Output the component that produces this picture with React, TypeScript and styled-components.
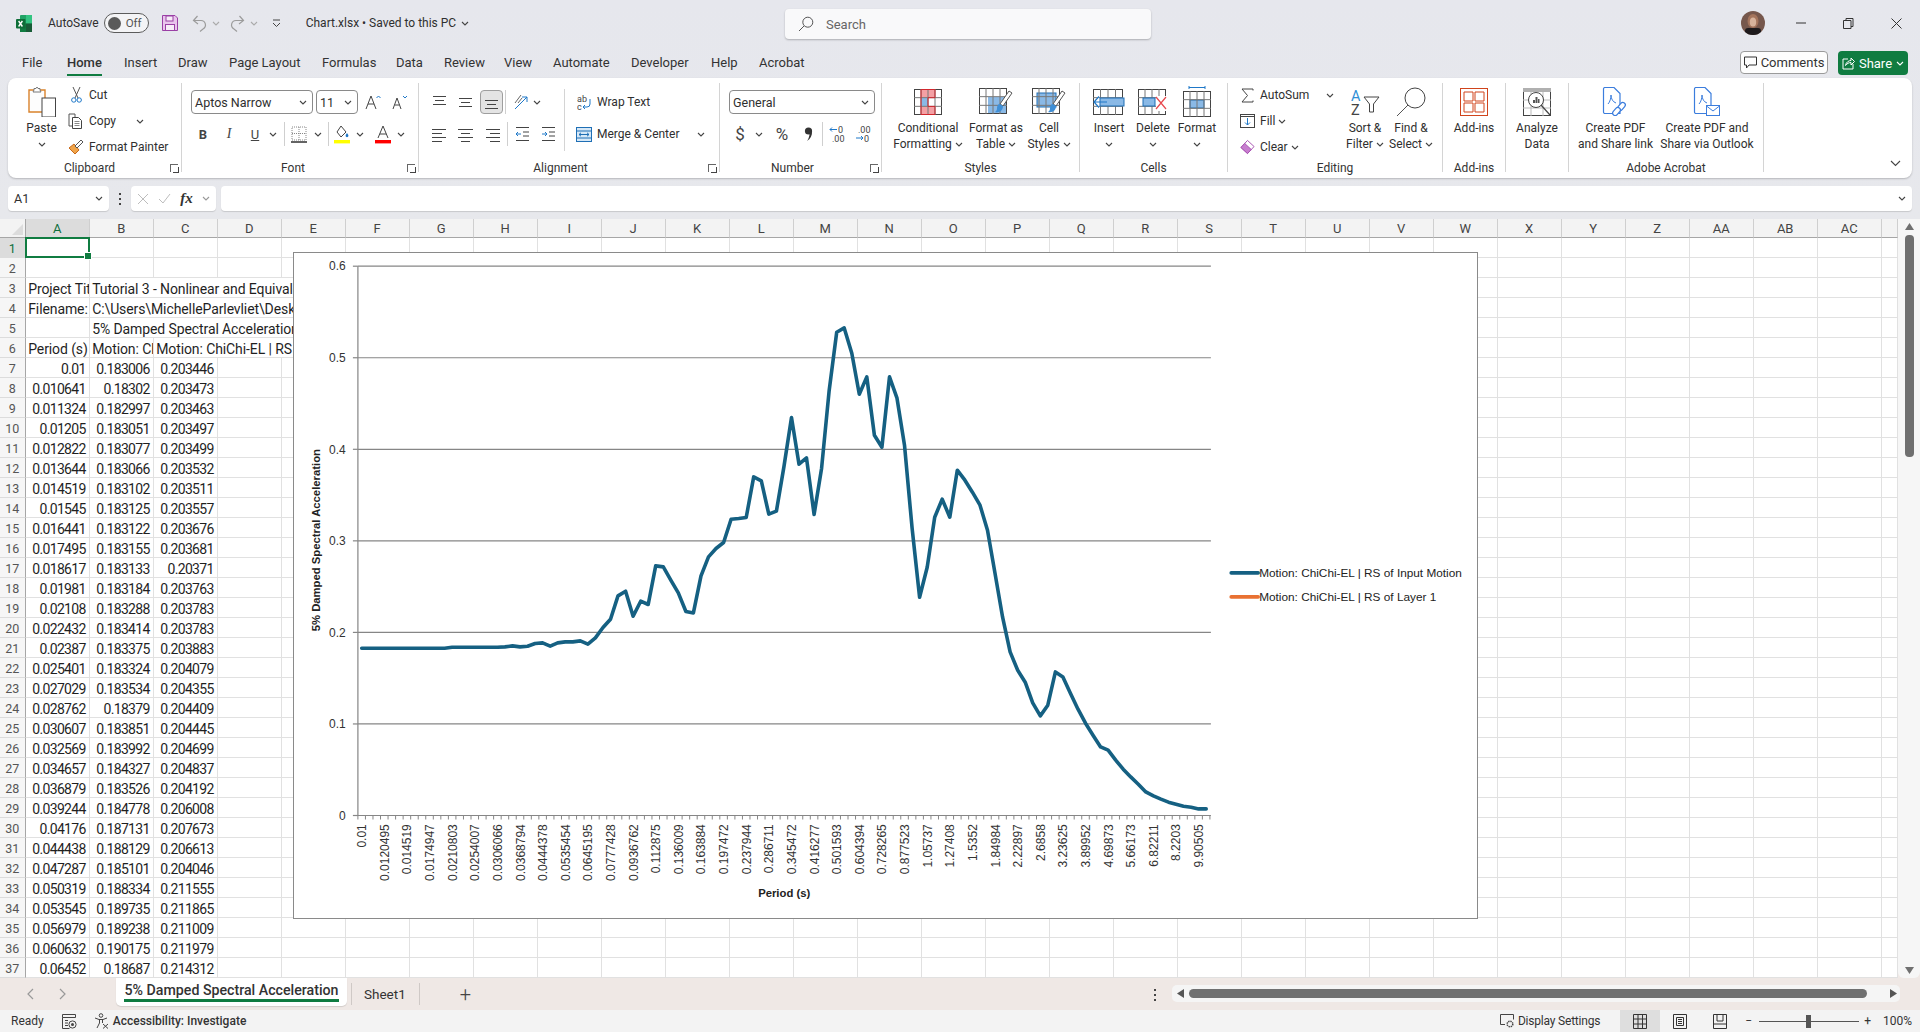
import React from 'react';
import styled, { createGlobalStyle } from 'styled-components';

const GlobalStyle = createGlobalStyle`
  html, body { margin: 0; padding: 0; background: #e6e7ed; }
  body { font-family: Roboto, "Liberation Sans", sans-serif; color: #2f2f2f; overflow: hidden; }
  * { box-sizing: border-box; }
`;

// #region Shell
const Page = styled.div`
  width: 1920px;
  height: 1032px;
  display: flex;
  flex-direction: column;
  overflow: hidden;
  background: linear-gradient(#e6e7ed 0, #e7e8ec 220px, #f0e9e6 980px);
`;
const TitleBar = styled.div`
  height: 46px;
  display: flex;
  align-items: center;
  padding-left: 16px;
  position: relative;
  font-size: 12px;
`;
const Spot = styled.div<{ $w?: number; $ml?: number; $mr?: number }>`
  display: flex;
  align-items: center;
  justify-content: center;
  flex: none;
  width: ${(p) => (p.$w ? `${p.$w}px` : 'auto')};
  margin-left: ${(p) => p.$ml ?? 0}px;
  margin-right: ${(p) => p.$mr ?? 0}px;
`;
const Toggle = styled.div`
  width: 45px;
  height: 20px;
  margin-left: 5px;
  border: 1.3px solid #5c5c5c;
  border-radius: 10px;
  display: flex;
  align-items: center;
  padding-left: 3px;
  font-size: 11.5px;
  color: #555;
  gap: 5px;
  background: #f4f4f6;
`;
const Knob = styled.span`
  width: 13px;
  height: 13px;
  border-radius: 50%;
  background: #5a5a5a;
`;
const SearchBox = styled.div`
  position: absolute;
  left: 785px;
  top: 9px;
  width: 366px;
  height: 30px;
  background: #f9f9fa;
  border-radius: 4px;
  box-shadow: 0 1px 2px rgba(0, 0, 0, 0.25);
  display: flex;
  align-items: center;
  padding-left: 13px;
  gap: 12px;
  font-size: 13px;
  color: #666;
`;
const WindowControls = styled.div`
  position: absolute;
  right: 0;
  top: 0;
  height: 46px;
  display: flex;
  align-items: center;
`;
const TabRow = styled.div`
  height: 32px;
  position: relative;
  display: flex;
  align-items: flex-start;
  padding: 8px 0 0 22px;
  font-size: 13px;
  color: #333;
`;
const MenuTab = styled.div<{ $left: number; $active?: boolean }>`
  position: absolute;
  left: ${(p) => p.$left}px;
  top: 8px;
  height: 22px;
  line-height: 18px;
  font-weight: ${(p) => (p.$active ? 500 : 400)};
  border-bottom: ${(p) => (p.$active ? '2.5px solid #107c41' : 'none')};
`;
const CommentsButton = styled.div`
  position: absolute;
  left: 1740px;
  top: 5px;
  width: 88px;
  height: 23px;
  background: #fdfdfd;
  border: 1px solid #9a9a9a;
  border-radius: 4px;
  display: flex;
  align-items: center;
  justify-content: center;
  gap: 4px;
  font-size: 13px;
`;
const ShareButton = styled.div`
  position: absolute;
  left: 1838px;
  top: 5px;
  width: 70px;
  height: 24px;
  background: #107c41;
  border-radius: 4px;
  color: #fff;
  display: flex;
  align-items: center;
  justify-content: center;
  gap: 4px;
  font-size: 13px;
`;
// #endregion

// #region Ribbon
const Ribbon = styled.div`
  height: 100px;
  margin: 0 8px;
  padding: 5px 0 6px;
  background: #fff;
  border-radius: 8px;
  box-shadow: 0 1px 2px rgba(0, 0, 0, 0.22);
  display: flex;
  position: relative;
  font-size: 12px;
  color: #2f2f2f;
`;
const Group = styled.div<{ $w: number }>`
  width: ${(p) => p.$w}px;
  flex: none;
  height: 89px;
  border-right: 1px solid #d4d4d4;
  display: flex;
  flex-direction: column;
  position: relative;
`;
const GroupBody = styled.div<{ $pad?: number }>`
  flex: 1;
  display: flex;
  padding-left: ${(p) => p.$pad ?? 0}px;
  min-height: 0;
`;
const GroupLabel = styled.div<{ $pr?: number }>`
  height: 13px;
  margin-bottom: -3px;
  padding-right: ${(p) => p.$pr ?? 0}px;
  line-height: 12px;
  text-align: center;
  font-size: 12px;
  color: #333;
  white-space: nowrap;
`;
const Launcher = styled.span`
  position: absolute;
  right: 3px;
  bottom: 0;
  width: 8px;
  height: 8px;
  border-left: 1px solid #666;
  border-top: 1px solid #666;
  &::after {
    content: '';
    position: absolute;
    left: 2px;
    top: 2px;
    width: 5px;
    height: 5px;
    border-right: 1px solid #444;
    border-bottom: 1px solid #444;
  }
`;
const LargeButton = styled.div<{ $w: number }>`
  width: ${(p) => p.$w}px;
  flex: none;
  display: flex;
  flex-direction: column;
  align-items: center;
`;
const LargeIcon = styled.div`
  height: 37px;
  display: flex;
  align-items: center;
  justify-content: center;
`;
const LabelLine = styled.div`
  height: 16px;
  line-height: 16px;
  display: flex;
  align-items: center;
  gap: 3px;
  white-space: nowrap;
`;
const SmallColumn = styled.div<{ $w: number }>`
  width: ${(p) => p.$w}px;
  flex: none;
  display: flex;
  flex-direction: column;
  margin-top: -1px;
`;
const SmallRow = styled.div`
  height: 26px;
  display: flex;
  align-items: center;
`;
const SmallText = styled.span`
  margin-left: 5px;
  white-space: nowrap;
`;
const ControlStack = styled.div<{ $w?: number }>`
  display: flex;
  flex-direction: column;
  gap: 8px;
  padding-top: 7px;
  width: ${(p) => (p.$w ? `${p.$w}px` : 'auto')};
  flex: none;
`;
const ControlRow = styled.div`
  height: 24px;
  display: flex;
  align-items: center;
`;
const Select = styled.div<{ $w: number; $ml?: number }>`
  width: ${(p) => p.$w}px;
  height: 24px;
  margin-left: ${(p) => p.$ml ?? 0}px;
  flex: none;
  border: 1px solid #8a8a8a;
  border-radius: 4px;
  display: flex;
  align-items: center;
  justify-content: space-between;
  padding: 0 5px 0 3px;
  font-size: 12.5px;
`;
const VRule = styled.span<{ $ml?: number; $mr?: number }>`
  width: 1px;
  height: 24px;
  background: #cfcfcf;
  flex: none;
  margin-left: ${(p) => p.$ml ?? 0}px;
  margin-right: ${(p) => p.$mr ?? 0}px;
`;
const TallRule = styled.span`
  width: 1px;
  height: 62px;
  margin-top: 6px;
  background: #d4d4d4;
  flex: none;
`;
const ActiveSlot = styled.div`
  width: 23px;
  height: 24px;
  margin-left: 2px;
  background: #e4e4e4;
  border: 1px solid #9e9e9e;
  border-radius: 4px;
  display: flex;
  align-items: flex-end;
  justify-content: center;
  padding-bottom: 3px;
  flex: none;
`;
const Glyph = styled.span<{ $bold?: boolean; $italic?: boolean; $under?: boolean; $size?: number; $serif?: boolean }>`
  font-size: ${(p) => p.$size ?? 14}px;
  font-weight: ${(p) => (p.$bold ? 700 : 400)};
  font-style: ${(p) => (p.$italic ? 'italic' : 'normal')};
  text-decoration: ${(p) => (p.$under ? 'underline' : 'none')};
  font-family: ${(p) => (p.$serif ? '"Liberation Serif", serif' : 'inherit')};
  color: #444;
  line-height: 1;
`;
const Collapse = styled.div`
  position: absolute;
  right: 11px;
  bottom: 8px;
`;
// #endregion

// #region Formula bar
const FormulaBar = styled.div`
  height: 41px;
  padding: 8px;
  display: flex;
  gap: 5px;
  align-items: flex-start;
`;
const FieldBox = styled.div<{ $w?: number }>`
  height: 25px;
  width: ${(p) => (p.$w ? `${p.$w}px` : 'auto')};
  flex: ${(p) => (p.$w ? 'none' : 1)};
  background: #fff;
  border-radius: 4px;
  box-shadow: 0 1px 1px rgba(0, 0, 0, 0.14);
  display: flex;
  align-items: center;
  justify-content: space-between;
  padding: 0 6px;
  font-size: 12.5px;
`;
const Dots = styled.div`
  width: 12px;
  height: 25px;
  display: flex;
  flex-direction: column;
  align-items: center;
  justify-content: center;
  gap: 3px;
  span {
    width: 2px;
    height: 2px;
    background: #444;
  }
`;
const FxText = styled.span`
  font-family: "Liberation Serif", serif;
  font-style: italic;
  font-size: 15px;
  font-weight: 700;
  color: #333;
`;
// #endregion

// #region Sheet
const SheetRow = styled.div`
  height: 759px;
  display: flex;
`;
const SheetArea = styled.div`
  width: 1898px;
  height: 759px;
  position: relative;
  overflow: hidden;
  background: #fff;
`;
const Grid = styled.div`
  display: grid;
  grid-template-columns: 25.7px repeat(29, 64px) 16.3px;
  grid-template-rows: 19px repeat(37, 20px);
`;
const Corner = styled.div`
  background: #f3f3f3;
  border-right: 1px solid #a6a6a6;
  border-bottom: 1px solid #a6a6a6;
  position: relative;
  &::after {
    content: '';
    position: absolute;
    right: 2px;
    bottom: 2px;
    border-style: solid;
    border-width: 0 0 11px 11px;
    border-color: transparent transparent #dcdcdc transparent;
  }
`;
const ColHead = styled.div<{ $on?: boolean }>`
  background: ${(p) => (p.$on ? '#dcdcdc' : '#f3f3f3')};
  color: ${(p) => (p.$on ? '#0f6e3d' : '#444')};
  border-right: 1px solid #cfcfcf;
  border-bottom: 1px solid #a6a6a6;
  font-size: 13px;
  line-height: 19px;
  text-align: center;
`;
const RowHead = styled.div<{ $on?: boolean }>`
  background: ${(p) => (p.$on ? '#dcdcdc' : '#f6f6f6')};
  color: ${(p) => (p.$on ? '#0f6e3d' : '#555')};
  border-right: 1px solid #a6a6a6;
  border-bottom: 1px solid #dcdcdc;
  font-size: 12.5px;
  line-height: 22px;
  text-align: center;
  overflow: hidden;
`;
const Cell = styled.div<{ $right?: boolean; $span?: number; $selected?: boolean }>`
  grid-column: span ${(p) => p.$span ?? 1};
  border-right: 1px solid #e1e1e1;
  border-bottom: 1px solid #e1e1e1;
  font-size: 14px;
  letter-spacing: ${(p) => (p.$right ? '-0.68px' : '-0.1px')};
  line-height: 23px;
  padding: 0 3px 0 2.5px;
  color: #1f1f1f;
  white-space: nowrap;
  overflow: ${(p) => (p.$selected ? 'visible' : 'hidden')};
  text-align: ${(p) => (p.$right ? 'right' : 'left')};
  position: relative;
  ${(p) =>
    p.$selected &&
    `
    &::before {
      content: '';
      position: absolute;
      left: -1px; top: -1px; right: -1px; bottom: -1px;
      border: 2px solid #107c41;
      z-index: 2;
    }
    &::after {
      content: '';
      position: absolute;
      right: -3px; bottom: -3px;
      width: 6px; height: 6px;
      background: #107c41;
      border: 1px solid #fff;
      z-index: 3;
    }
  `}
`;
const ChartBox = styled.div`
  position: absolute;
  left: 292.5px;
  top: 32.5px;
  width: 1185.5px;
  height: 667px;
  background: #fff;
  border: 1.3px solid #8a8a8a;
  svg {
    display: block;
    margin: -1px;
  }
`;
const VScroll = styled.div`
  width: 22px;
  height: 759px;
  background: #f6f6f6;
  border-radius: 0 0 6px 6px;
  display: flex;
  flex-direction: column;
  align-items: center;
  position: relative;
  padding-top: 3px;
`;
const VThumb = styled.div`
  width: 9px;
  height: 222px;
  margin-top: 4px;
  background: #6f6f6f;
  border-radius: 4px;
`;
const VDown = styled.div`
  position: absolute;
  bottom: 0;
  left: 0;
  right: 0;
  height: 12px;
  display: flex;
  justify-content: center;
`;
// #endregion

// #region Tabs + status
const SheetTabs = styled.div`
  height: 32px;
  display: flex;
  background: #efe8e5;
  position: relative;
`;
const TabNav = styled.div`
  width: 116px;
  display: flex;
  align-items: center;
  padding-left: 27px;
  gap: 25px;
  flex: none;
`;
const ActiveSheet = styled.div`
  width: 231px;
  height: 28px;
  background: #fff;
  border-radius: 0 0 5px 5px;
  box-shadow: 0 1px 1px rgba(0, 0, 0, 0.12);
  padding: 0 8px;
  font-weight: 500;
  font-size: 14.2px;
  color: #333;
  flex: none;
`;
const ActiveSheetText = styled.div`
  height: 24px;
  line-height: 24px;
  border-bottom: 3px solid #107c41;
  white-space: nowrap;
  text-align: center;
`;
const PlainSheet = styled.div`
  display: flex;
  align-items: center;
  height: 22px;
  margin: 5px 0 0 4px;
  padding: 0 13px 0 12px;
  border-left: 1px solid #cfc9c6;
  border-right: 1px solid #cfc9c6;
  font-size: 13.5px;
  color: #333;
`;
const AddSheet = styled.div`
  margin-left: 40px;
  font-size: 20px;
  line-height: 32px;
  font-weight: 300;
  color: #444;
`;
const TabMenuDots = styled(Dots)`
  position: absolute;
  left: 1149px;
  top: 4px;
`;
const HScroll = styled.div`
  position: absolute;
  left: 1172px;
  top: 7px;
  width: 728px;
  height: 17px;
  background: #f5f5f5;
  border-radius: 5px;
  display: flex;
  align-items: center;
  padding-left: 4px;
`;
const HThumb = styled.div`
  width: 678px;
  height: 9px;
  margin-left: 4px;
  background: #707070;
  border-radius: 4.5px;
`;
const StatusBar = styled.div`
  height: 22px;
  display: flex;
  align-items: center;
  background: #f3f3f3;
  font-size: 12px;
  color: #333;
  padding-left: 11px;
`;
const StatusText = styled.span<{ $strong?: boolean; $ml?: number; $mr?: number; $tight?: boolean }>`
  font-weight: ${(p) => (p.$strong ? 500 : 400)};
  margin-left: ${(p) => p.$ml ?? 0}px;
  margin-right: ${(p) => p.$mr ?? 0}px;
  letter-spacing: ${(p) => (p.$tight ? '-0.2px' : 'normal')};
  white-space: nowrap;
`;
const StatusFill = styled.div`
  flex: 1;
`;
const ViewButton = styled.div<{ $on?: boolean }>`
  width: 40px;
  height: 22px;
  display: flex;
  align-items: center;
  justify-content: center;
  background: ${(p) => (p.$on ? '#dedede' : 'transparent')};
  flex: none;
`;
const ZoomSlider = styled.div`
  width: 100px;
  height: 1px;
  background: #555;
  margin: 0 5px 0 7px;
  position: relative;
  flex: none;
  &::after {
    content: '';
    position: absolute;
    left: 47px;
    top: -6px;
    width: 5px;
    height: 13px;
    background: #555;
  }
`;
// #endregion

// #region Icons
const Chev = ({ c = '#444' }: { c?: string }) => (
  <svg width="8" height="5" viewBox="0 0 8 5">
    <path d="M1 1l3 3 3-3" fill="none" stroke={c} strokeWidth="1.1" />
  </svg>
);

const ExcelLogo = () => (
  <svg width="16" height="17" viewBox="0 0 16 17">
    <rect x="4" y="0" width="12" height="17" rx="1" fill="#21a366" />
    <rect x="10" y="0" width="6" height="8.5" fill="#33c481" />
    <rect x="4" y="8.5" width="6" height="8.5" fill="#107c41" />
    <rect x="10" y="8.5" width="6" height="8.5" fill="#185c37" />
    <rect x="0" y="4" width="9.5" height="9.5" rx="1" fill="#0e6e38" />
    <path d="M2.6 6l3.8 5.5M6.4 6l-3.8 5.5" stroke="#fff" strokeWidth="1.4" />
  </svg>
);
const SaveIcon = () => (
  <svg width="16" height="16" viewBox="0 0 16 16">
    <path d="M.5.5h12.5l2.5 2.5v12.5H.5z" fill="#e9c5ec" stroke="#9a3fa5" />
    <rect x="4" y="1" width="7" height="5" fill="#f7edf8" stroke="#9a3fa5" />
    <rect x="3.5" y="9.5" width="9" height="6" fill="#f7edf8" stroke="#9a3fa5" />
  </svg>
);
const Undo = ({ flip }: { flip?: boolean }) => (
  <svg width="15" height="17" viewBox="0 0 15 17" style={flip ? { transform: 'scaleX(-1)' } : undefined}>
    <path d="M5.500 1L1.500 5.500l4.500 3.500M2 5.500h7a4.500 4.500 0 0 1 2 8.500l-3 2.500" fill="none" stroke="#9c9c9c" strokeWidth="1.2" />
  </svg>
);
const CustomizeIcon = () => (
  <svg width="9" height="9" viewBox="0 0 9 9">
    <path d="M1 1h7M1 4l3.5 3.5L8 4" fill="none" stroke="#444" strokeWidth="1" />
  </svg>
);
const Magnifier = ({ s = 16 }: { s?: number }) => (
  <svg width={s} height={s} viewBox="0 0 16 16">
    <circle cx="9.8" cy="6.2" r="5" fill="none" stroke="#555" strokeWidth="1" />
    <path d="M6 10L1 15" stroke="#555" strokeWidth="1" />
  </svg>
);
const Avatar = () => (
  <svg width="24" height="24" viewBox="0 0 24 24">
    <clipPath id="av">
      <circle cx="12" cy="12" r="12" />
    </clipPath>
    <g clipPath="url(#av)">
      <rect width="24" height="24" fill="#76574c" />
      <ellipse cx="12" cy="10" rx="5.5" ry="7" fill="#a4745c" />
      <ellipse cx="12" cy="11" rx="3.2" ry="4.5" fill="#d8b39c" />
      <rect x="4" y="17" width="16" height="8" rx="3" fill="#1e1a1c" />
    </g>
  </svg>
);
const CommentIcon = ({ c = '#333' }: { c?: string }) => (
  <svg width="13" height="13" viewBox="0 0 13 13">
    <path d="M.5 1h12v8H5L2.5 12V9h-2z" fill="none" stroke={c} />
  </svg>
);
const ShareIcon = () => (
  <svg width="13" height="14" viewBox="0 0 13 14">
    <path d="M6 3H1v10h10V8M3.5 9.5C4 6 7 4.5 9 4.5V2l3.5 3.5L9 9V6.5C7 6.5 5 7.5 3.5 9.5z" fill="none" stroke="#fff" />
  </svg>
);
const PasteIcon = () => (
  <svg width="28" height="31" viewBox="0 0 28 31">
    <path d="M1 4h16v22H1z" fill="#fdfdfd" stroke="#d9822b" strokeWidth="1.4" />
    <path d="M6 4V2.5h2L9 1l1 1.5h2V4l1 2H5z" fill="#fff" stroke="#777" />
    <rect x="14" y="12" width="13.5" height="19" fill="#fff" stroke="#444" />
  </svg>
);
const CutIcon = () => (
  <svg width="11" height="16" viewBox="0 0 11 16">
    <path d="M2 0l5 11M9 0L4 11" stroke="#555" fill="none" />
    <circle cx="2.8" cy="13" r="2.2" fill="none" stroke="#1f78c8" />
    <circle cx="8.2" cy="13" r="2.2" fill="none" stroke="#1f78c8" />
  </svg>
);
const CopyIcon = () => (
  <svg width="16" height="16" viewBox="0 0 16 16">
    <path d="M1 1h6v3M1 1v12h3" fill="none" stroke="#555" />
    <path d="M4.5 4.5h6l3 3v8h-9z" fill="#fff" stroke="#444" />
    <path d="M6.5 8.5h5M6.5 10.5h5M6.5 12.5h5" stroke="#888" />
  </svg>
);
const PainterIcon = () => (
  <svg width="16" height="16" viewBox="0 0 16 16">
    <path d="M1 9l5-4 5 6-4 4z" fill="#f0a54a" stroke="#c8691a" />
    <path d="M7 7l6-6 2 2-6 6z" fill="#fff" stroke="#555" />
  </svg>
);
const GrowA = ({ up }: { up?: boolean }) => (
  <svg width="16" height="16" viewBox="0 0 16 16">
    <path d={up ? 'M1 15L6 2l5 13M3 10h6' : 'M1 15l4-11 4 11M2.8 11h4.4'} fill="none" stroke="#444" />
    <path d={up ? 'M11.5 4L13.5 2l2 2' : 'M11 2l2 2 2-2'} fill="none" stroke="#1f78c8" />
  </svg>
);
const BordersIcon = () => (
  <svg width="16" height="17" viewBox="0 0 16 17">
    <path d="M1 1h14v13H1zM8 1v13M1 7.5h14" fill="none" stroke="#888" strokeDasharray="1 1" />
    <path d="M0 16h16" stroke="#222" strokeWidth="1.4" />
  </svg>
);
const FillIcon = () => (
  <svg width="16" height="19" viewBox="0 0 16 19">
    <path d="M7 1l5 6-5 5-4-5z" fill="#fff" stroke="#444" />
    <path d="M13 8c1 1.4 1.4 2 1.4 2.8a1.4 1.4 0 0 1-2.8 0c0-.8.4-1.4 1.4-2.8z" fill="#1f78c8" />
    <rect y="15" width="16" height="3.4" fill="#ffff00" />
  </svg>
);
const FontColorIcon = () => (
  <svg width="16" height="19" viewBox="0 0 16 19">
    <path d="M3 13L8 1l5 12M4.8 9h6.4" fill="none" stroke="#444" />
    <rect y="15" width="16" height="3.4" fill="#ff0000" />
  </svg>
);
const CommaIcon = () => (
  <svg width="9" height="15" viewBox="0 0 9 15">
    <circle cx="4.5" cy="4" r="3.6" fill="#333" />
    <path d="M8 4.500c.2 4-1.500 7.500-5 9.500 1.800-2.500 2.500-5 2.500-7z" fill="#333" />
  </svg>
);
const AlignLines = ({ lines }: { lines: [number, number, number][] }) => (
  <svg width="15" height="15" viewBox="0 0 15 15">
    {lines.map(([y, x1, x2]) => (
      <path key={y} d={`M${x1} ${y}.5H${x2}`} stroke="#444" />
    ))}
  </svg>
);
const OrientationIcon = () => (
  <svg width="16" height="16" viewBox="0 0 16 16">
    <path d="M2 9L8 1M5 9l4-5" stroke="#666" fill="none" />
    <path d="M2 15L14 3M9 3h5v5" stroke="#1f78c8" fill="none" />
  </svg>
);
const IndentIcon = ({ inward }: { inward?: boolean }) => (
  <svg width="15" height="14" viewBox="0 0 15 14">
    <path d="M1 .5h13M8 5h6M8 9h6M1 13.5h13" stroke="#444" />
    <path d={inward ? 'M1 7h5M4 5l2 2-2 2' : 'M6 7H1M3 5L1 7l2 2'} stroke="#1f78c8" fill="none" />
  </svg>
);
const WrapIcon = () => (
  <svg width="14" height="17" viewBox="0 0 14 17">
    <text x="0" y="8" fontSize="9" fill="#444" fontFamily="Roboto">ab</text>
    <text x="0" y="16" fontSize="9" fill="#444" fontFamily="Roboto">c</text>
    <path d="M13 5v5a3 3 0 0 1-3 3H6M8 11l-2 2 2 2" fill="none" stroke="#1f78c8" />
  </svg>
);
const MergeIcon = () => (
  <svg width="16" height="15" viewBox="0 0 16 15">
    <rect x=".5" y=".5" width="15" height="14" fill="#d6e8f7" stroke="#1f6fb5" />
    <path d="M.5 4h15M.5 11h15" stroke="#1f6fb5" />
    <path d="M3 7.5h10M5 5.8L3 7.5l2 1.7M11 5.8l2 1.7-2 1.7" stroke="#1f6fb5" fill="none" />
  </svg>
);
const IncDec = ({ inc }: { inc?: boolean }) => (
  <svg width="17" height="18" viewBox="0 0 17 18">
    <text x={inc ? 9 : 3} y="8" fontSize="9" fill="#444" fontFamily="Roboto">{inc ? '0' : '.00'}</text>
    <text x={inc ? 3 : 9} y="17" fontSize="9" fill="#444" fontFamily="Roboto">{inc ? '.00' : '0'}</text>
    <path d={inc ? 'M8 4.500H1M3 2.500L1 4.500l2 2' : 'M1 13h7M6 11l2 2-2 2'} stroke="#1f78c8" fill="none" />
  </svg>
);

// shared sheet drawing for the Styles and Cells buttons
const SheetLines = ({ w = 28, h = 26, cols = 4, rows = 3 }: { w?: number; h?: number; cols?: number; rows?: number }) => (
  <g fill="none" stroke="#444">
    <rect x=".5" y=".5" width={w - 1} height={h - 1} />
    {Array.from({ length: cols - 1 }, (_, i) => (
      <path key={`c${i}`} d={`M${((i + 1) * w) / cols} 0v${h}`} stroke="#777" />
    ))}
    {Array.from({ length: rows - 1 }, (_, i) => (
      <path key={`r${i}`} d={`M0 ${((i + 1) * h) / rows}h${w}`} stroke="#777" />
    ))}
  </g>
);
const ConditionalIcon = () => (
  <svg width="28" height="26" viewBox="0 0 28 26">
    <rect x="7" y="0" width="14" height="8.700" fill="#f4a0a4" />
    <rect x="7" y="8.700" width="7" height="8.700" fill="#8ab9e6" />
    <rect x="7" y="17.400" width="14" height="8.600" fill="#f4a0a4" />
    <SheetLines />
    <path d="M7 .5h14v8.200H14v8.700h7v8.100H7z" fill="none" stroke="#d2272d" />
  </svg>
);
const Brush = () => (
  <g>
    <path d="M30 3l3 2-9 13-3-2z" fill="#fff" stroke="#555" />
    <path d="M21 16l3 2c0 4-3 7-8 6 2-1 2-3 2-4 0-2 1-4 3-4z" fill="#3f8fd6" />
  </g>
);
const TableStyleIcon = () => (
  <svg width="34" height="27" viewBox="0 0 34 27">
    <rect x="9" y="9" width="19" height="17" fill="#8ab9e6" />
    <SheetLines />
    <Brush />
  </svg>
);
const CellStyleIcon = () => (
  <svg width="34" height="27" viewBox="0 0 34 27">
    <rect x="5" y="5" width="19" height="14" fill="#8ab9e6" stroke="#1f6fb5" />
    <SheetLines />
    <Brush />
  </svg>
);
const InsertCellsIcon = () => (
  <svg width="32" height="26" viewBox="0 0 32 26">
    <SheetLines w={30} />
    <rect x="7" y="9" width="24" height="8" fill="#8ab9e6" stroke="#1f6fb5" />
    <path d="M14 13H1M6 7.500L1 13l5 5.500" fill="#fff" stroke="#1f78c8" strokeWidth="1.2" />
  </svg>
);
const DeleteCellsIcon = () => (
  <svg width="30" height="26" viewBox="0 0 30 26">
    <SheetLines />
    <rect x="5" y="9" width="12" height="8" fill="#8ab9e6" stroke="#1f6fb5" />
    <rect x="18" y="7" width="11" height="15" fill="#fff" />
    <path d="M18 8l10 12M28 8L18 20" stroke="#e8484d" strokeWidth="1.2" />
  </svg>
);
const FormatCellsIcon = () => (
  <svg width="28" height="31" viewBox="0 0 28 31">
    <path d="M6 1.5h16M6 0v3M22 0v3" stroke="#1f78c8" />
    <g transform="translate(0 5)">
      <rect x="7" y="9" width="14" height="8" fill="#8ab9e6" stroke="#1f6fb5" />
      <SheetLines />
    </g>
  </svg>
);
const SigmaIcon = () => (
  <svg width="13" height="15" viewBox="0 0 13 15">
    <path d="M12 2.5V1H1l5.5 6.5L1 14h11v-1.5" fill="none" stroke="#444" />
  </svg>
);
const FillDownIcon = () => (
  <svg width="15" height="14" viewBox="0 0 15 14">
    <rect x=".5" y=".5" width="14" height="13" fill="#fff" stroke="#444" />
    <path d="M.5 2.5h14" stroke="#444" />
    <path d="M7.5 4v7M5 8.5l2.5 2.5L10 8.5" fill="none" stroke="#1f78c8" />
  </svg>
);
const ClearIcon = () => (
  <svg width="16" height="16" viewBox="0 0 16 16">
    <path d="M1 8.5L8 1l7 6.5L8 15z" fill="#fff" stroke="#a64fb0" />
    <path d="M1 8.5L5 4.2l7 6.5L8 15z" fill="#c77dcf" stroke="#a64fb0" />
  </svg>
);
const SortFilterIcon = () => (
  <svg width="29" height="26" viewBox="0 0 29 26">
    <text x="0" y="11.500" fontSize="14.500" fill="#2f8fd6" fontFamily="Roboto">A</text>
    <text x="0" y="25.500" fontSize="14.500" fill="#444" fontFamily="Roboto">Z</text>
    <path d="M13 8h15l-5.500 7v8h-4v-8z" fill="none" stroke="#444" />
  </svg>
);
const FindIcon = () => (
  <svg width="30" height="30" viewBox="0 0 30 30">
    <circle cx="19" cy="11" r="10" fill="none" stroke="#444" />
    <path d="M12 18L1 29" stroke="#555" />
  </svg>
);
const AddinsIcon = () => (
  <svg width="28" height="28" viewBox="0 0 28 28">
    <rect x=".5" y=".5" width="27" height="27" fill="none" stroke="#d0441c" />
    <path d="M4 4h9v9H4zM15 4h9v9h-9zM4 15h9v9H4zM15 15h9v9h-9z" fill="none" stroke="#d0441c" />
  </svg>
);
const AnalyzeIcon = () => (
  <svg width="28" height="28" viewBox="0 0 28 28">
    <rect x=".5" y=".5" width="27" height="27" fill="#fff" stroke="#444" />
    <rect width="28" height="4" fill="#b0b0b0" />
    <path d="M0 12h28M0 20h28M8 4v24M20 4v24" stroke="#bbb" />
    <circle cx="13" cy="12" r="7.5" fill="#fff" stroke="#444" />
    <path d="M10 15v-3h2v3zM12.5 15V9h2v6zM15 15v-4h1.5v4z" fill="#555" />
    <path d="M18 17l9 10" stroke="#444" strokeWidth="1.2" />
  </svg>
);
const PdfIcon = ({ mail }: { mail?: boolean }) => (
  <svg width="28" height="29" viewBox="0 0 28 29">
    <path d="M1.5 2a1.5 1.5 0 0 1 1.5-1.5h9L18 6.5v20H3A1.5 1.5 0 0 1 1.5 25z" fill="#fff" stroke="#3b7ddd" strokeWidth="1.2" />
    <path d="M6 17c2-2 3-6 3-9 0 4 2 7 5 8" fill="none" stroke="#3b7ddd" />
    {mail ? (
      <g>
        <rect x="13.5" y="18.5" width="13" height="10" fill="#fff" stroke="#3b7ddd" />
        <path d="M13.5 19l6.5 5 6.5-5" fill="none" stroke="#3b7ddd" />
      </g>
    ) : (
      <g fill="#fff" stroke="#3b7ddd" strokeWidth="1.2">
        <rect x="17" y="15" width="5" height="9" rx="2.5" transform="rotate(40 19.5 19.5)" />
        <rect x="12" y="20" width="5" height="9" rx="2.5" transform="rotate(40 14.5 24.5)" />
      </g>
    )}
  </svg>
);
const XMark = () => (
  <svg width="12" height="12" viewBox="0 0 12 12">
    <path d="M1 1l10 10M11 1L1 11" stroke="#bdbdbd" />
  </svg>
);
const CheckMark = () => (
  <svg width="13" height="12" viewBox="0 0 13 12">
    <path d="M1 6l4 4 7-9" fill="none" stroke="#bdbdbd" />
  </svg>
);
const Arrow = ({ d, c = '#707070' }: { d: 'u' | 'd' | 'l' | 'r'; c?: string }) => {
  const paths = { u: 'M0 8L4.5 1 9 8z', d: 'M0 1l4.5 7L9 1z', l: 'M8 0L1 4.5 8 9z', r: 'M1 0l7 4.5L1 9z' };
  return (
    <svg width="9" height="9" viewBox="0 0 9 9">
      <path d={paths[d]} fill={c} />
    </svg>
  );
};
const NavArrow = ({ right }: { right?: boolean }) => (
  <svg width="7" height="12" viewBox="0 0 7 12">
    <path d={right ? 'M1 1l5 5-5 5' : 'M6 1L1 6l5 5'} fill="none" stroke="#999" strokeWidth="1.2" />
  </svg>
);
const MacroIcon = () => (
  <svg width="15" height="15" viewBox="0 0 15 15">
    <path d="M.5.5h13v3H.5zM.5 3.5v11h7" fill="none" stroke="#444" />
    <path d="M3 6.5h3M3 9h3M3 11.5h3" stroke="#444" />
    <circle cx="10.5" cy="10.5" r="3.6" fill="none" stroke="#444" />
    <circle cx="10.5" cy="10.5" r="1.5" fill="#444" />
  </svg>
);
const AccessIcon = () => (
  <svg width="15" height="16" viewBox="0 0 15 16">
    <circle cx="7" cy="2.5" r="1.8" fill="none" stroke="#444" />
    <path d="M1 5l4 1.5h4L13 5M5.5 6.5V10L3 15M8.5 6.5V10" fill="none" stroke="#444" />
    <path d="M9 11l5 4.5M14 11l-5 4.5" stroke="#444" />
  </svg>
);
const DisplayIcon = () => (
  <svg width="15" height="14" viewBox="0 0 15 14">
    <path d="M5 10.5H.5V.5h13v5" fill="none" stroke="#444" />
    <circle cx="10" cy="10" r="2.8" fill="none" stroke="#444" strokeWidth="1.5" strokeDasharray="1.4 .8" />
  </svg>
);
const NormalView = () => (
  <svg width="14" height="15" viewBox="0 0 14 15">
    <path d="M.5.5h13v14H.5zM.5 5h13M.5 10h13M5 .5v14M9.5.5v14" fill="none" stroke="#333" />
  </svg>
);
const LayoutView = () => (
  <svg width="14" height="15" viewBox="0 0 14 15">
    <path d="M.5.5h13v14H.5z" fill="none" stroke="#333" />
    <path d="M3.5 3.5h7v8h-7zM5 5.5h4M5 7.5h4M5 9.5h4" fill="none" stroke="#333" />
  </svg>
);
const BreakView = () => (
  <svg width="14" height="15" viewBox="0 0 14 15">
    <path d="M.5.5h13v14H.5zM.5 10h13M4 .5V7h6V.5" fill="none" stroke="#333" />
  </svg>
);
// #endregion

// #region Chart
const lineYs = [
  648, 648, 648, 648, 648, 648, 648, 648, 648, 648, 648, 648,
  647, 647, 647, 647, 647, 647, 647,
  646.7, 645.7, 646.7, 646, 643.3, 642.7, 646, 642.7, 641.7, 641.7, 640.7, 644, 637.7, 627.3, 619,
  595.7, 591, 616, 601, 604.3, 565.7, 566.7, 580, 592.7, 611.3, 612.7, 575.7, 556.7, 548.3, 542.3, 519,
  518.3, 517.3, 476.7, 480.7, 514, 511, 466.7, 417.3, 464, 457.7, 514.3, 468, 390, 332, 327.7, 353,
  394, 376.7, 435, 447, 376.7, 398, 445, 528, 597, 567, 517, 499, 517, 470, 480, 492, 505, 530, 573,
  617, 651.7, 670, 682, 702.7, 715.7, 705, 671.7, 676.7, 693, 709, 723, 735, 746.7, 750, 760, 769,
  776.7, 784, 791.7, 795.7, 799, 802, 804, 806, 807, 808.7, 808.7,
];
const xLabels = [
  '0.01', '0.0120495', '0.014519', '0.0174947', '0.0210803', '0.0254007', '0.0306066', '0.0368794',
  '0.0444378', '0.0535454', '0.0645195', '0.0777428', '0.0936762', '0.112875', '0.136009', '0.163884',
  '0.197472', '0.237944', '0.286711', '0.345472', '0.416277', '0.501593', '0.604394', '0.728265',
  '0.877523', '1.05737', '1.27408', '1.5352', '1.84984', '2.22897', '2.6858', '3.23625', '3.89952',
  '4.69873', '5.66173', '6.82211', '8.2203', '9.90505',
];
const AXIS_X = 357.7;
const STEP = 7.54;
const yFor = (v: number) => 815.3 - v * 915.5;
const axisColor = '#868686';

const Chart = () => (
  <ChartBox>
    <svg width="1186" height="667" viewBox="292.8 251.8 1186 667" fontFamily="'Liberation Sans', sans-serif">
      {[0.1, 0.2, 0.3, 0.4, 0.5, 0.6].map((v) => (
        <path key={v} d={`M${AXIS_X} ${yFor(v)}H1210.7`} stroke={axisColor} strokeWidth="1.2" />
      ))}
      <path d={`M${AXIS_X} ${yFor(0.6)}V815.3H1210.7`} fill="none" stroke={axisColor} strokeWidth="1.2" />
      {[0, 0.1, 0.2, 0.3, 0.4, 0.5, 0.6].map((v) => (
        <g key={v}>
          <path d={`M352.7 ${yFor(v)}H${AXIS_X}`} stroke={axisColor} strokeWidth="1.2" />
          <text x="345.5" y={yFor(v) + 4.3} textAnchor="end" fontSize="12" fill="#333">
            {v === 0 ? '0' : v.toFixed(1)}
          </text>
        </g>
      ))}
      {lineYs.map((_, i) => (
        <path key={i} d={`M${AXIS_X + STEP * i} 815.3v4`} stroke={axisColor} strokeWidth="1" />
      ))}
      <path d={`M${AXIS_X + STEP * 113} 815.3v4`} stroke={axisColor} strokeWidth="1" />
      {xLabels.map((t, i) => (
        <text
          key={t}
          transform={`translate(${AXIS_X + STEP * (i * 3 + 0.5) + 4.5} 824) rotate(-90)`}
          textAnchor="end"
          fontSize="12"
          fill="#333"
        >
          {t}
        </text>
      ))}
      <polyline
        points={lineYs.map((y, i) => `${(AXIS_X + STEP * (i + 0.5)).toFixed(1)},${y}`).join(' ')}
        fill="none"
        stroke="#156082"
        strokeWidth="3.6"
        strokeLinejoin="round"
        strokeLinecap="round"
      />
      <text transform="translate(320 540) rotate(-90)" textAnchor="middle" fontSize="11.3" fontWeight="700" fill="#222">
        5% Damped Spectral Acceleration
      </text>
      <text x="784" y="897" textAnchor="middle" fontSize="11.3" fontWeight="700" fill="#222">
        Period (s)
      </text>
      <path d="M1231 572.7h27" stroke="#156082" strokeWidth="3.6" strokeLinecap="round" />
      <text x="1259" y="576.7" fontSize="11.8" fill="#222">Motion: ChiChi-EL | RS of Input Motion</text>
      <path d="M1231 596.7h27" stroke="#e97132" strokeWidth="3.6" strokeLinecap="round" />
      <text x="1259" y="600.7" fontSize="11.8" fill="#222">Motion: ChiChi-EL | RS of Layer 1</text>
    </svg>
  </ChartBox>
);
// #endregion

// #region Sheet data
const columnNames = Array.from({ length: 29 }, (_, i) =>
  i < 26 ? String.fromCharCode(65 + i) : `A${String.fromCharCode(65 + i - 26)}`,
).concat('');

const numbers = `0.01 0.183006 0.203446
0.010641 0.18302 0.203473
0.011324 0.182997 0.203463
0.01205 0.183051 0.203497
0.012822 0.183077 0.203499
0.013644 0.183066 0.203532
0.014519 0.183102 0.203511
0.01545 0.183125 0.203557
0.016441 0.183122 0.203676
0.017495 0.183155 0.203681
0.018617 0.183133 0.20371
0.01981 0.183184 0.203763
0.02108 0.183288 0.203783
0.022432 0.183414 0.203783
0.02387 0.183375 0.203883
0.025401 0.183324 0.204079
0.027029 0.183534 0.204355
0.028762 0.18379 0.204409
0.030607 0.183851 0.204445
0.032569 0.183992 0.204699
0.034657 0.184327 0.204837
0.036879 0.183526 0.204192
0.039244 0.184778 0.206008
0.04176 0.187131 0.207673
0.044438 0.188129 0.206613
0.047287 0.185101 0.204046
0.050319 0.188334 0.211555
0.053545 0.189735 0.211865
0.056979 0.189238 0.211009
0.060632 0.190175 0.211979
0.06452 0.18687 0.214312`
  .split('\n')
  .map((l) => l.split(' '));

type CellDef = { text?: string; span?: number; right?: boolean; selected?: boolean };

const cellsForRow = (row: number): CellDef[] => {
  const fixed: Record<number, CellDef[]> = {
    1: [{ selected: true }],
    3: [{ text: 'Project Title' }, { text: 'Tutorial 3 - Nonlinear and Equivalent Linear', span: 4 }],
    4: [{ text: 'Filename:' }, { text: 'C:\\Users\\MichelleParlevliet\\Desktop', span: 4 }],
    5: [{}, { text: '5% Damped Spectral Acceleration', span: 4 }],
    6: [{ text: 'Period (s)' }, { text: 'Motion: ChiChi-EL' }, { text: 'Motion: ChiChi-EL | RS of Input Motion', span: 3 }],
  };
  const start: CellDef[] =
    fixed[row] ?? (row >= 7 ? numbers[row - 7].map((text) => ({ text, right: true })) : []);
  const used = start.reduce((n, c) => n + (c.span ?? 1), 0);
  return [...start, ...Array.from({ length: 30 - used }, () => ({}))];
};
// #endregion

const tabs: [string, number][] = [
  ['File', 22], ['Home', 67], ['Insert', 124], ['Draw', 178], ['Page Layout', 229], ['Formulas', 322],
  ['Data', 396], ['Review', 444], ['View', 504], ['Automate', 553], ['Developer', 631], ['Help', 711], ['Acrobat', 759],
];

const AlignmentGroup = () => (
  <Group $w={301}>
    <GroupBody>
      <ControlStack $w={145}>
        <ControlRow>
          <Spot $w={26} $ml={7}><AlignLines lines={[[1, 1, 14], [5, 3, 12], [9, 1, 14]]} /></Spot>
          <Spot $w={26}><AlignLines lines={[[3, 1, 14], [7, 3, 12], [11, 1, 14]]} /></Spot>
          <ActiveSlot><AlignLines lines={[[5, 1, 14], [9, 3, 12], [13, 1, 14]]} /></ActiveSlot>
          <VRule $ml={2} />
          <Spot $w={20} $ml={5}><OrientationIcon /></Spot>
          <Spot $w={12}><Chev /></Spot>
        </ControlRow>
        <ControlRow>
          <Spot $w={26} $ml={7}><AlignLines lines={[[2, 0, 14], [6, 0, 10], [10, 0, 14], [14, 0, 10]]} /></Spot>
          <Spot $w={26}><AlignLines lines={[[2, 0, 15], [6, 3, 12], [10, 0, 15], [14, 3, 12]]} /></Spot>
          <Spot $w={25} $ml={2}><AlignLines lines={[[2, 1, 15], [6, 5, 15], [10, 1, 15], [14, 5, 15]]} /></Spot>
          <VRule $ml={2} />
          <Spot $w={28}><IndentIcon /></Spot>
          <Spot $w={25}><IndentIcon inward /></Spot>
        </ControlRow>
      </ControlStack>
      <TallRule />
      <ControlStack>
        <ControlRow>
          <Spot $w={16} $ml={11}><WrapIcon /></Spot>
          <SmallText>Wrap Text</SmallText>
        </ControlRow>
        <ControlRow>
          <Spot $w={16} $ml={11}><MergeIcon /></Spot>
          <SmallText>Merge &amp; Center</SmallText>
          <Spot $ml={18}><Chev /></Spot>
        </ControlRow>
      </ControlStack>
    </GroupBody>
    <GroupLabel $pr={17}>Alignment</GroupLabel>
    <Launcher />
  </Group>
);

const FontGroup = () => (
  <Group $w={237}>
    <GroupBody>
      <ControlStack>
        <ControlRow>
          <Select $w={122} $ml={9}>Aptos Narrow<Chev /></Select>
          <Select $w={42} $ml={3}>11<Chev /></Select>
          <Spot $w={16} $ml={7}><GrowA up /></Spot>
          <Spot $w={16} $ml={11}><GrowA /></Spot>
        </ControlRow>
        <ControlRow>
          <Spot $w={26} $ml={8}><Glyph $bold $size={13}>B</Glyph></Spot>
          <Spot $w={26}><Glyph $italic $size={14} $serif>I</Glyph></Spot>
          <Spot $w={26}><Glyph $under $size={13}>U</Glyph></Spot>
          <Spot $w={10}><Chev /></Spot>
          <VRule $ml={6} $mr={6} />
          <Spot $w={16}><BordersIcon /></Spot>
          <Spot $w={21}><Chev /></Spot>
          <VRule $mr={5} />
          <Spot $w={16}><FillIcon /></Spot>
          <Spot $w={20}><Chev /></Spot>
          <Spot $w={16} $ml={5}><FontColorIcon /></Spot>
          <Spot $w={20}><Chev /></Spot>
        </ControlRow>
      </ControlStack>
    </GroupBody>
    <GroupLabel $pr={14}>Font</GroupLabel>
    <Launcher />
  </Group>
);

const NumberGroup = () => (
  <Group $w={162}>
    <GroupBody>
      <ControlStack>
        <ControlRow>
          <Select $w={146} $ml={9}>General<Chev /></Select>
        </ControlRow>
        <ControlRow>
          <Spot $w={22} $ml={9}><Glyph $size={17}>$</Glyph></Spot>
          <Spot $w={16}><Chev /></Spot>
          <Spot $w={30}><Glyph $size={17}>%</Glyph></Spot>
          <Spot $w={22}><CommaIcon /></Spot>
          <VRule $ml={3} />
          <Spot $w={17} $ml={6}><IncDec inc /></Spot>
          <Spot $w={17} $ml={9}><IncDec /></Spot>
        </ControlRow>
      </ControlStack>
    </GroupBody>
    <GroupLabel $pr={16}>Number</GroupLabel>
    <Launcher />
  </Group>
);

const RibbonBar = () => (
  <Ribbon>
    <Group $w={174}>
      <GroupBody $pad={9}>
        <LargeButton $w={49}>
          <LargeIcon><PasteIcon /></LargeIcon>
          <LabelLine>Paste</LabelLine>
          <LabelLine><Chev /></LabelLine>
        </LargeButton>
        <SmallColumn $w={100}>
          <SmallRow><Spot $w={16} $ml={2}><CutIcon /></Spot><SmallText>Cut</SmallText></SmallRow>
          <SmallRow>
            <Spot $w={16} $ml={2}><CopyIcon /></Spot><SmallText>Copy</SmallText>
            <Spot $ml={20}><Chev /></Spot>
          </SmallRow>
          <SmallRow><Spot $w={16} $ml={2}><PainterIcon /></Spot><SmallText>Format Painter</SmallText></SmallRow>
        </SmallColumn>
      </GroupBody>
      <GroupLabel $pr={10}>Clipboard</GroupLabel>
      <Launcher />
    </Group>
    <FontGroup />
    <AlignmentGroup />
    <NumberGroup />
    <Group $w={198}>
      <GroupBody $pad={10}>
        <LargeButton $w={72}>
          <LargeIcon><ConditionalIcon /></LargeIcon>
          <LabelLine>Conditional</LabelLine>
          <LabelLine>Formatting <Chev /></LabelLine>
        </LargeButton>
        <LargeButton $w={64}>
          <LargeIcon><TableStyleIcon /></LargeIcon>
          <LabelLine>Format as</LabelLine>
          <LabelLine>Table <Chev /></LabelLine>
        </LargeButton>
        <LargeButton $w={42}>
          <LargeIcon><CellStyleIcon /></LargeIcon>
          <LabelLine>Cell</LabelLine>
          <LabelLine>Styles <Chev /></LabelLine>
        </LargeButton>
      </GroupBody>
      <GroupLabel>Styles</GroupLabel>
    </Group>
    <Group $w={148}>
      <GroupBody $pad={7}>
        <LargeButton $w={44}>
          <LargeIcon><InsertCellsIcon /></LargeIcon>
          <LabelLine>Insert</LabelLine>
          <LabelLine><Chev /></LabelLine>
        </LargeButton>
        <LargeButton $w={44}>
          <LargeIcon><DeleteCellsIcon /></LargeIcon>
          <LabelLine>Delete</LabelLine>
          <LabelLine><Chev /></LabelLine>
        </LargeButton>
        <LargeButton $w={44}>
          <LargeIcon><FormatCellsIcon /></LargeIcon>
          <LabelLine>Format</LabelLine>
          <LabelLine><Chev /></LabelLine>
        </LargeButton>
      </GroupBody>
      <GroupLabel>Cells</GroupLabel>
    </Group>
    <Group $w={215}>
      <GroupBody $pad={12}>
        <SmallColumn $w={100}>
          <SmallRow><Spot $w={15}><SigmaIcon /></Spot><SmallText>AutoSum</SmallText><Spot $ml={17}><Chev /></Spot></SmallRow>
          <SmallRow><Spot $w={15}><FillDownIcon /></Spot><SmallText>Fill</SmallText><Spot $ml={3}><Chev /></Spot></SmallRow>
          <SmallRow><Spot $w={15}><ClearIcon /></Spot><SmallText>Clear</SmallText><Spot $ml={3}><Chev /></Spot></SmallRow>
        </SmallColumn>
        <LargeButton $w={50}>
          <LargeIcon><SortFilterIcon /></LargeIcon>
          <LabelLine>Sort &amp;</LabelLine>
          <LabelLine>Filter <Chev /></LabelLine>
        </LargeButton>
        <LargeButton $w={42}>
          <LargeIcon><FindIcon /></LargeIcon>
          <LabelLine>Find &amp;</LabelLine>
          <LabelLine>Select <Chev /></LabelLine>
        </LargeButton>
      </GroupBody>
      <GroupLabel>Editing</GroupLabel>
    </Group>
    <Group $w={63}>
      <GroupBody>
        <LargeButton $w={62}>
          <LargeIcon><AddinsIcon /></LargeIcon>
          <LabelLine>Add-ins</LabelLine>
        </LargeButton>
      </GroupBody>
      <GroupLabel>Add-ins</GroupLabel>
    </Group>
    <Group $w={63}>
      <GroupBody>
        <LargeButton $w={62}>
          <LargeIcon><AnalyzeIcon /></LargeIcon>
          <LabelLine>Analyze</LabelLine>
          <LabelLine>Data</LabelLine>
        </LargeButton>
      </GroupBody>
    </Group>
    <Group $w={195}>
      <GroupBody>
        <LargeButton $w={93}>
          <LargeIcon><PdfIcon /></LargeIcon>
          <LabelLine>Create PDF</LabelLine>
          <LabelLine>and Share link</LabelLine>
        </LargeButton>
        <LargeButton $w={90}>
          <LargeIcon><PdfIcon mail /></LargeIcon>
          <LabelLine>Create PDF and</LabelLine>
          <LabelLine>Share via Outlook</LabelLine>
        </LargeButton>
      </GroupBody>
      <GroupLabel>Adobe Acrobat</GroupLabel>
    </Group>
    <Collapse>
      <svg width="11" height="7" viewBox="0 0 11 7"><path d="M1 1l4.500 4.500L10 1" fill="none" stroke="#444" strokeWidth="1.1" /></svg>
    </Collapse>
  </Ribbon>
);

export default function App() {
  return (
    <Page>
      <GlobalStyle />
      <TitleBar>
        <ExcelLogo />
        <Spot $ml={16}>AutoSave</Spot>
        <Toggle><Knob />Off</Toggle>
        <Spot $ml={13}><SaveIcon /></Spot>
        <Spot $ml={14}><Undo /></Spot>
        <Spot $w={18}><Chev c="#aaa" /></Spot>
        <Spot $ml={5}><Undo flip /></Spot>
        <Spot $w={18}><Chev c="#aaa" /></Spot>
        <Spot $ml={9}><CustomizeIcon /></Spot>
        <Spot $ml={25}>Chart.xlsx • Saved to this PC</Spot>
        <Spot $ml={5}><Chev /></Spot>
        <SearchBox><Magnifier />Search</SearchBox>
        <WindowControls>
          <Avatar />
          <Spot $w={12} $ml={30}>
            <svg width="10" height="2" viewBox="0 0 10 2"><path d="M0 1h10" stroke="#333" /></svg>
          </Spot>
          <Spot $w={12} $ml={35}>
            <svg width="11" height="11" viewBox="0 0 11 11">
              <path d="M3 2.500V.5h7v8H8M.5 2.500h7.500v8H.5z" fill="none" stroke="#333" />
            </svg>
          </Spot>
          <Spot $w={12} $ml={36} $mr={18}>
            <svg width="11" height="11" viewBox="0 0 11 11"><path d="M.5.5l10 10M10.500.5l-10 10" stroke="#333" /></svg>
          </Spot>
        </WindowControls>
      </TitleBar>
      <TabRow>
        {tabs.map(([name, left]) => (
          <MenuTab key={name} $left={left} $active={name === 'Home'}>{name}</MenuTab>
        ))}
        <CommentsButton><CommentIcon />Comments</CommentsButton>
        <ShareButton><ShareIcon />Share<Chev c="#fff" /></ShareButton>
      </TabRow>
      <RibbonBar />
      <FormulaBar>
        <FieldBox $w={101}>A1<Chev /></FieldBox>
        <Dots><span /><span /><span /></Dots>
        <FieldBox $w={85}>
          <XMark /><CheckMark /><FxText>fx</FxText><Chev c="#999" />
        </FieldBox>
        <FieldBox><span /><Chev /></FieldBox>
      </FormulaBar>
      <SheetRow>
        <SheetArea>
          <Grid>
            <Corner />
            {columnNames.map((name, i) => (
              <ColHead key={i} $on={i === 0}>{name}</ColHead>
            ))}
            {Array.from({ length: 37 }, (_, r) => (
              <React.Fragment key={r}>
                <RowHead $on={r === 0}>{r + 1}</RowHead>
                {cellsForRow(r + 1).map((c, i) => (
                  <Cell key={i} $right={c.right} $span={c.span} $selected={c.selected}>{c.text}</Cell>
                ))}
              </React.Fragment>
            ))}
          </Grid>
          <Chart />
        </SheetArea>
        <VScroll>
          <Arrow d="u" />
          <VThumb />
          <VDown><Arrow d="d" /></VDown>
        </VScroll>
      </SheetRow>
      <SheetTabs>
        <TabNav><NavArrow /><NavArrow right /></TabNav>
        <ActiveSheet><ActiveSheetText>5% Damped Spectral Acceleration</ActiveSheetText></ActiveSheet>
        <PlainSheet>Sheet1</PlainSheet>
        <AddSheet>+</AddSheet>
        <TabMenuDots><span /><span /><span /></TabMenuDots>
        <HScroll>
          <Arrow d="l" c="#555" />
          <HThumb />
          <Spot $ml={22}><Arrow d="r" c="#555" /></Spot>
        </HScroll>
      </SheetTabs>
      <StatusBar>
        <StatusText>Ready</StatusText>
        <Spot $ml={18}><MacroIcon /></Spot>
        <Spot $ml={17}><AccessIcon /></Spot>
        <StatusText $strong $ml={4}>Accessibility: Investigate</StatusText>
        <StatusFill />
        <DisplayIcon />
        <StatusText $ml={3} $tight>Display Settings</StatusText>
        <Spot $ml={20} />
        <ViewButton $on><NormalView /></ViewButton>
        <ViewButton><LayoutView /></ViewButton>
        <ViewButton><BreakView /></ViewButton>
        <Spot $ml={5}>−</Spot>
        <ZoomSlider />
        <Spot>+</Spot>
        <StatusText $ml={12} $mr={8}>100%</StatusText>
      </StatusBar>
    </Page>
  );
}
